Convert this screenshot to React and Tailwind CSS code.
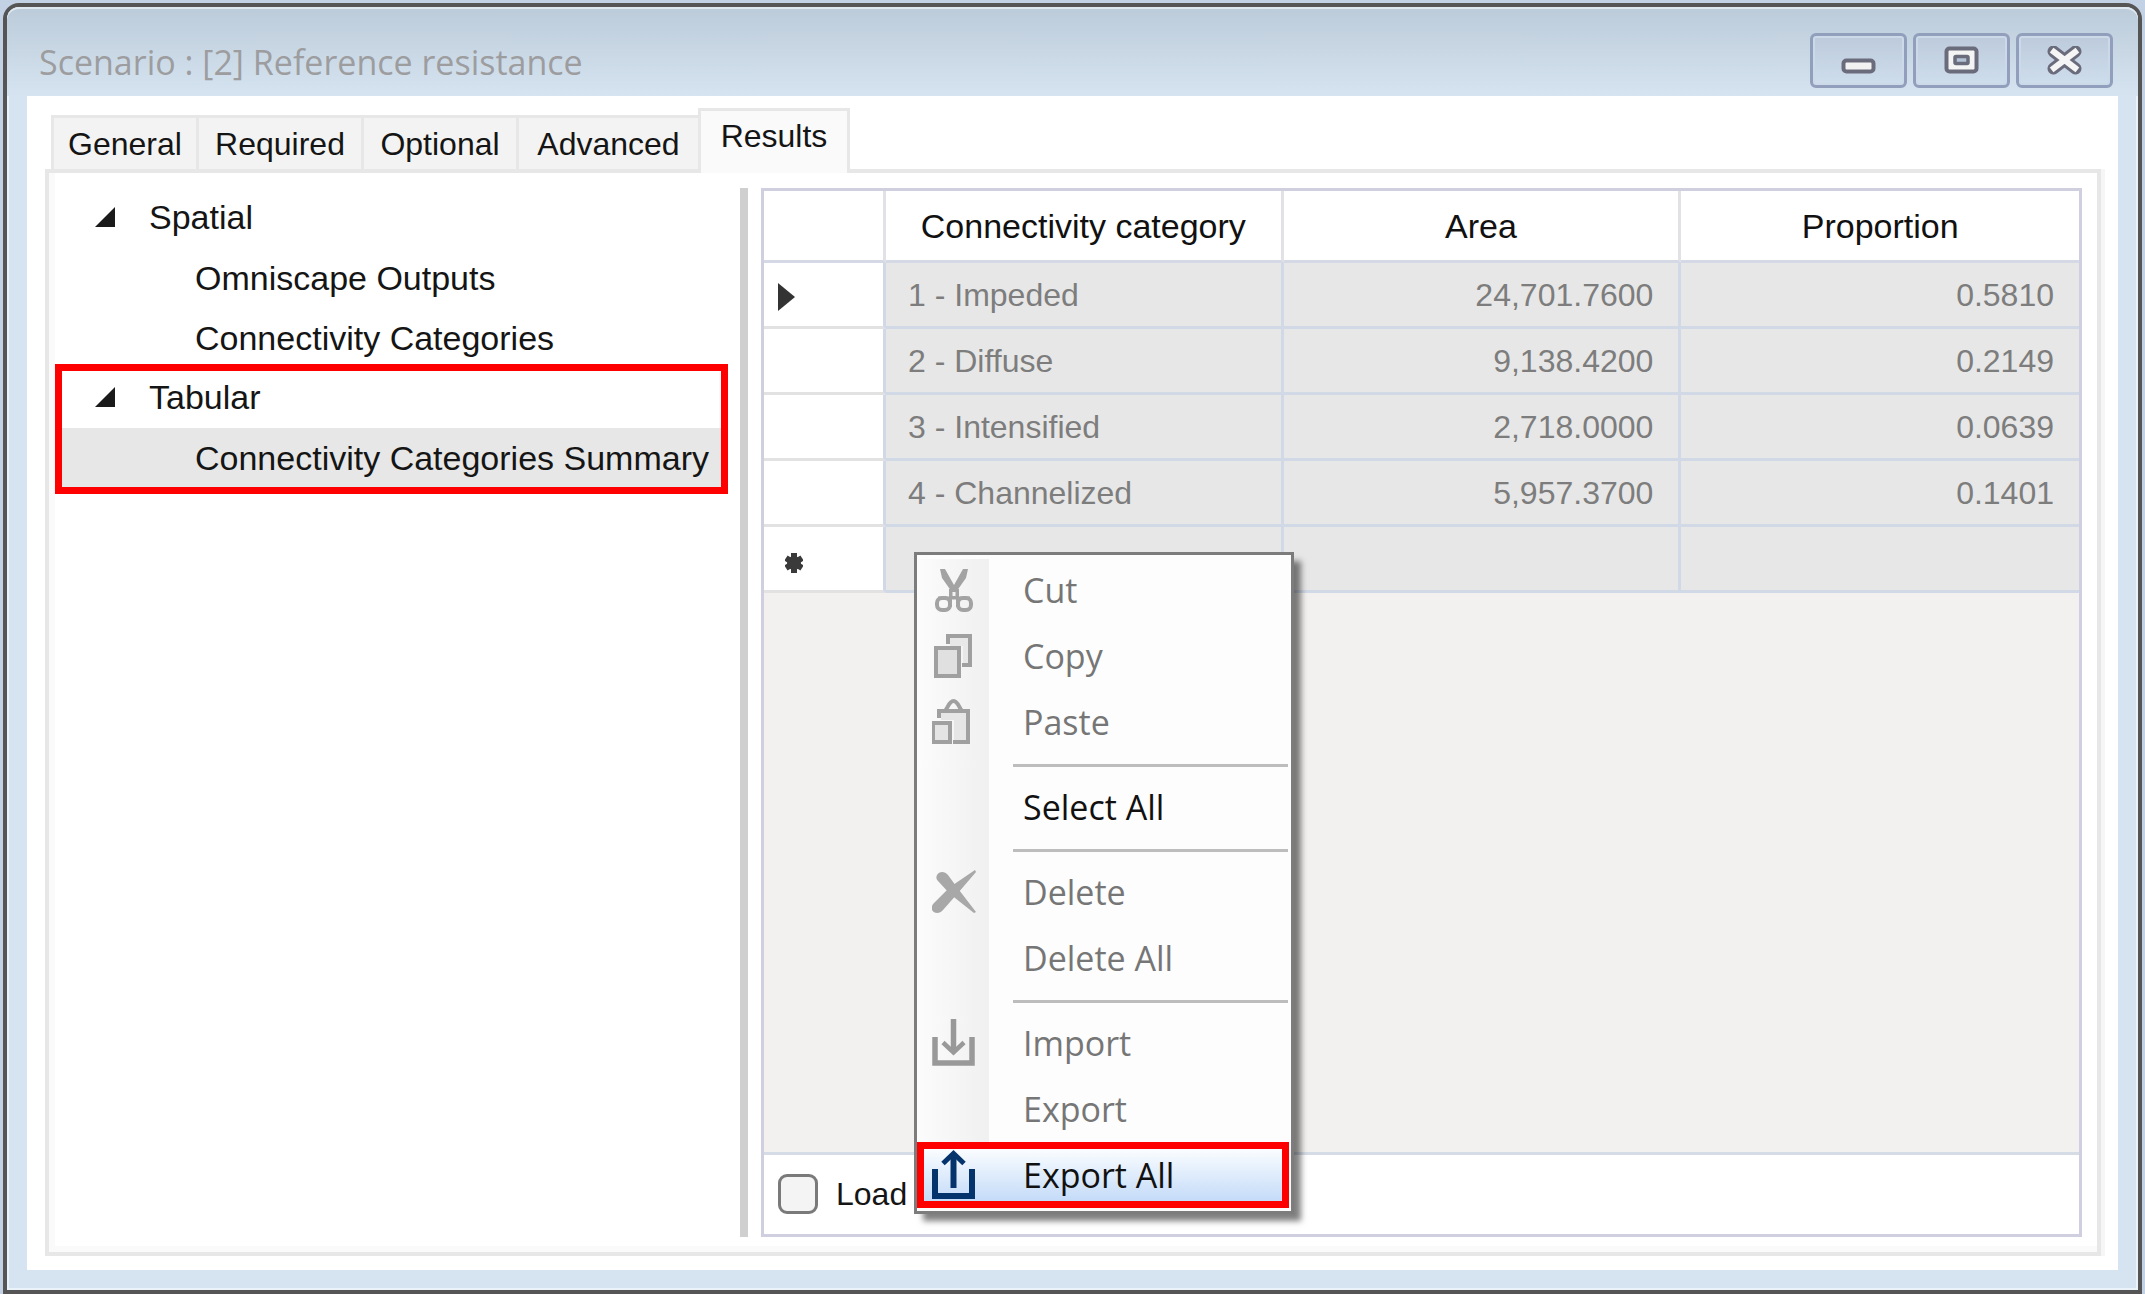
import React from "react";

const tabs = [
  { label: "General", width: "w-[145px]" },
  { label: "Required", width: "w-[165px]" },
  { label: "Optional", width: "w-[155px]" },
  { label: "Advanced", width: "w-[182px]" },
];

const rows = [
  ["1 - Impeded", "24,701.7600", "0.5810"],
  ["2 - Diffuse", "9,138.4200", "0.2149"],
  ["3 - Intensified", "2,718.0000", "0.0639"],
  ["4 - Channelized", "5,957.3700", "0.1401"],
];

function MinimizeIcon() {
  return (
    <svg width="36" height="30" viewBox="0 0 36 30" aria-hidden="true">
      <rect x="2.500" y="14.500" width="30" height="11" rx="3" fill="#f2f2f2" stroke="#6a6c7c" strokeWidth="4" />
    </svg>
  );
}

function MaximizeIcon() {
  return (
    <svg width="36" height="30" viewBox="0 0 36 30" aria-hidden="true">
      <rect x="2.500" y="2.500" width="30" height="23" rx="3" fill="#f4f4f4" stroke="#6a6c7c" strokeWidth="4" />
      <rect x="11" y="10.500" width="13" height="7" rx="1" fill="#b4c2d6" stroke="#6a6c7c" strokeWidth="3.500" />
    </svg>
  );
}

function CloseIcon() {
  return (
    <svg width="36" height="30" viewBox="0 0 36 30" fill="none" aria-hidden="true">
      <path d="M6.500 5.500L28.500 22.500M28.500 5.500L6.500 22.500" stroke="#6a6c7c" strokeWidth="12" strokeLinecap="round" />
      <path d="M7 6L28 22M28 6L7 22" stroke="#f5f5f5" strokeWidth="6" strokeLinecap="square" />
    </svg>
  );
}

function CutIcon() {
  return (
    <svg width="44" height="50" viewBox="0 0 44 50" fill="none" stroke="#a3a3a3" aria-hidden="true">
      <path d="M8 4L13 4L22 20L31 4L36 4L34 13L25.500 25V34H18.500V25L10 13Z" fill="#a3a3a3" stroke="none" />
      <path d="M22 27V31" stroke="#f4f4f4" strokeWidth="3" />
      <path d="M18.500 24V42M25.500 24V42M6 33H38" strokeWidth="3" />
      <rect x="5" y="33" width="13" height="12" rx="5" strokeWidth="4" />
      <rect x="26" y="33" width="13" height="12" rx="5" strokeWidth="4" />
    </svg>
  );
}

function CopyIcon() {
  return (
    <svg width="44" height="50" viewBox="0 0 44 50" fill="none" stroke="#a0a0a0" strokeWidth="4" aria-hidden="true">
      <path d="M18 5H39V34H31V15H18Z" fill="#e8e8e8" stroke="none" />
      <path d="M16 13V5H38V34H30" />
      <rect x="4" y="17" width="23" height="28" fill="#e0e0e0" />
    </svg>
  );
}

function PasteIcon() {
  return (
    <svg width="44" height="50" viewBox="0 0 44 50" fill="none" stroke="#a0a0a0" strokeWidth="4" aria-hidden="true">
      <path d="M9 13H36V45H22V23H9Z" fill="#e6e6e6" stroke="none" />
      <path d="M7 21V14H36V45H21" />
      <path d="M13 14C16 11 17 4 21.500 4C26 4 27 11 30 14" />
      <rect x="1" y="26" width="17" height="19" fill="#e4e4e4" />
    </svg>
  );
}

function DeleteIcon() {
  return (
    <svg width="44" height="50" viewBox="0 0 44 50" fill="#a8a8a8" aria-hidden="true">
      <path d="M5 8C7 4 13 4 16 8L24 19L44 45L42 46L18 27L6 14C4 12 4 10 5 8Z" />
      <path d="M43 3L44 5L26 26L11 43C8 47 2 47 0 43C-1 40 0 38 3 35L18 20Z" />
    </svg>
  );
}

function ImportIcon() {
  return (
    <svg width="44" height="54" viewBox="0 0 44 54" fill="none" stroke="#999999" strokeWidth="5.500" aria-hidden="true">
      <path d="M3 21V47H40V21" />
      <path d="M21.500 3V36" />
      <path d="M11 26.500L21.500 36.500L32 26.500" strokeWidth="4.500" />
    </svg>
  );
}

function ExportIcon() {
  return (
    <svg width="44" height="54" viewBox="0 0 44 54" fill="none" stroke="#05346c" strokeWidth="6" aria-hidden="true">
      <path d="M3 21V48H40V21" />
      <path d="M21.500 40V6" />
      <path d="M11 15.500L21.500 5.500L32 15.500" strokeWidth="5" />
    </svg>
  );
}

const menu = [
  { label: "Cut", icon: CutIcon, disabled: true },
  { label: "Copy", icon: CopyIcon, disabled: true },
  { label: "Paste", icon: PasteIcon, disabled: true },
  null,
  { label: "Select All" },
  null,
  { label: "Delete", icon: DeleteIcon, disabled: true },
  { label: "Delete All", disabled: true },
  null,
  { label: "Import", icon: ImportIcon, disabled: true },
  { label: "Export", disabled: true },
  { label: "Export All", icon: ExportIcon, active: true },
];

function WindowButton({ label, children }) {
  return (
    <button
      type="button"
      aria-label={label}
      className="flex h-[55px] w-[97px] items-center justify-center rounded-md border-[3px] border-[#929fbc] bg-linear-to-b from-[#bccadb] to-[#cfdeed] inset-ring-2 inset-ring-[#cbd9e8]"
    >
      {children}
    </button>
  );
}

function TitleBar() {
  return (
    <header className="flex h-[89px] items-start justify-between rounded-t-xl bg-linear-to-b from-[#bccbd9] to-[#d6e4f1] pl-8 pr-[25px] pt-[26px] shadow-[inset_0_2px_0_#dfe8f1]">
      <h1 className="whitespace-nowrap pt-1 font-['Open_Sans',sans-serif] text-[34px] leading-[50px] text-[#9d9d9f]">
        Scenario : [2] Reference resistance
      </h1>
      <div className="flex gap-[6px]">
        <WindowButton label="Minimize"><MinimizeIcon /></WindowButton>
        <WindowButton label="Maximize"><MaximizeIcon /></WindowButton>
        <WindowButton label="Close"><CloseIcon /></WindowButton>
      </div>
    </header>
  );
}

function TabBar() {
  return (
    <div role="tablist" className="flex items-end pl-1.5 text-[32px] leading-[50px]">
      {tabs.map((tab) => (
        <button
          key={tab.label}
          type="button"
          role="tab"
          aria-selected="false"
          className={`${tab.width} h-[54px] border-l-[3px] border-t-[3px] border-[#e7e7e7] bg-[#f3f3f3] text-center`}
        >
          {tab.label}
        </button>
      ))}
      <button
        type="button"
        role="tab"
        aria-selected="true"
        className="relative -mb-1 h-[65px] w-[152px] border-x-[3px] border-t-[3px] border-[#e7e7e7] bg-[#fafafa] pb-3 text-center"
      >
        Results
      </button>
    </div>
  );
}

function TreeParent({ label }) {
  return (
    <button type="button" aria-expanded="true" className="flex h-[60px] w-full items-center gap-[34px] pb-0.5 pl-[46px] text-left">
      <svg width="20" height="20" viewBox="0 0 20 20" aria-hidden="true">
        <path d="M20 0V20H0Z" fill="#1a1a1a" />
      </svg>
      {label}
    </button>
  );
}

function TreeChild({ label, selected }) {
  const fill = selected ? "bg-[#e7e7e7]" : "";
  return (
    <div className="pl-3">
      <button type="button" className={`${fill} flex h-[60px] w-full items-center pl-[134px] text-left`}>
        {label}
      </button>
    </div>
  );
}

function Tree() {
  return (
    <nav className="w-[691px] shrink-0 whitespace-nowrap text-[34px] leading-[50px]">
      <TreeParent label="Spatial" />
      <TreeChild label="Omniscape Outputs" />
      <TreeChild label="Connectivity Categories" />
      <div className="relative mr-4">
        <TreeParent label="Tabular" />
        <TreeChild label="Connectivity Categories Summary" selected />
        <div className="pointer-events-none absolute -bottom-1.5 -top-1 left-1.5 -right-1 border-[7px] border-[#ff0000]" />
      </div>
    </nav>
  );
}

const headCell = "h-[72px] border-b-[3px] border-r-[3px] border-b-[#d5d9e6] border-r-[#e2e2e6] bg-white font-normal last:border-r-0";
const bodyCell = "h-[66px] border-b-[3px] border-r-[3px] border-[#d1d9e6] bg-[#e7e7e7] p-0 last:border-r-0";
const rowHead = "h-[66px] border-b-[3px] border-r-[3px] border-b-[#e2e2e2] border-r-[#d1d9e6] bg-white p-0";

function DataGrid() {
  return (
    <table className="w-full table-fixed border-separate border-spacing-0 text-[32px] leading-[50px] text-[#7d7d7d]">
      <colgroup>
        <col className="w-[122px]" />
        <col />
        <col />
        <col />
      </colgroup>
      <thead className="text-[34px] text-[#111111]">
        <tr>
          <td className={headCell} />
          <th scope="col" className={headCell}>Connectivity category</th>
          <th scope="col" className={headCell}>Area</th>
          <th scope="col" className={headCell}>Proportion</th>
        </tr>
      </thead>
      <tbody>
        {rows.map((row, i) => (
          <tr key={row[0]}>
            <td className={rowHead}>
              {i === 0 && (
                <svg className="ml-[14px] mt-1 block" width="17" height="28" viewBox="0 0 17 28" aria-hidden="true">
                  <path d="M0 0L17 14L0 28Z" fill="#333333" />
                </svg>
              )}
            </td>
            <td className={bodyCell}><div className="pl-[22px]">{row[0]}</div></td>
            <td className={bodyCell}><div className="pr-[25px] text-right">{row[1]}</div></td>
            <td className={bodyCell}><div className="pr-[25px] text-right">{row[2]}</div></td>
          </tr>
        ))}
        <tr>
          <td className={rowHead}>
            <svg className="ml-[21px] mt-2 block" width="18" height="20" viewBox="0 0 18 20" aria-hidden="true">
              <path d="M9 0V20M1 5L17 15M17 5L1 15" stroke="#3a3a3a" strokeWidth="6" />
              <circle cx="9" cy="10" r="7" fill="#3a3a3a" />
            </svg>
          </td>
          <td className={bodyCell} />
          <td className={bodyCell} />
          <td className={bodyCell} />
        </tr>
      </tbody>
    </table>
  );
}

function MenuItem({ item }) {
  const Icon = item.icon;
  const tone = item.disabled ? "text-[#767676]" : "text-[#111111]";
  return (
    <button
      type="button"
      role="menuitem"
      disabled={item.disabled}
      className={`${tone} relative flex h-[66px] w-full items-center text-left`}
    >
      {item.active && (
        <span className="absolute inset-y-0 left-0 right-0.5 border-[7px] border-[#ff0000] bg-linear-to-b from-[#fbfdff] to-[#c4dbf8]" />
      )}
      <span className="relative flex w-[106px] shrink-0 pl-[15px]">{Icon && <Icon />}</span>
      <span className="relative">{item.label}</span>
    </button>
  );
}

function ContextMenu() {
  return (
    <div
      role="menu"
      className="absolute left-[150px] top-[361px] w-[380px] border-[3px] border-[#7c7c7c] bg-[#fdfdfd] pb-[3px] pt-0.5 font-['Open_Sans',sans-serif] text-[34px] leading-[50px] shadow-[8px_8px_6px_-1px_rgba(0,0,0,0.5)]"
    >
      <div className="absolute bottom-[68px] left-0 top-1 w-[72px] bg-linear-to-r from-[#fcfcfc] to-[#f0f0f0]" />
      {menu.map((item, i) =>
        item ? (
          <MenuItem key={item.label} item={item} />
        ) : (
          <div key={i} role="separator" className="flex h-[19px] items-center pl-24 pr-[3px] pt-0.5">
            <div className="h-[3px] w-full bg-[#bdbdbd]" />
          </div>
        )
      )}
    </div>
  );
}

function ResultsGrid() {
  return (
    <section className="relative ml-[13px] flex min-w-0 flex-1 flex-col border-[3px] border-[#cfcfe0] bg-[#f3f1ef]">
      <DataGrid />
      <div className="flex-1" />
      <label className="flex h-[82px] items-center gap-[18px] border-t-[3px] border-[#d5dce6] bg-white pb-0.5 pl-[14px] text-[32px] leading-[50px]">
        <input
          type="checkbox"
          className="size-10 appearance-none rounded-[9px] border-[3px] border-[#7a7a7a] bg-[#f4f4f4]"
        />
        Load
      </label>
      <ContextMenu />
    </section>
  );
}

export default function App() {
  return (
    <div className="flex min-h-screen flex-col bg-[#c3d1e5] px-[3px] pt-[3px] font-['Liberation_Sans',Arial,sans-serif] text-[#151515]">
      <div className="flex flex-1 flex-col rounded-t-2xl border-4 border-[#555555] bg-[#d6e4f1] inset-ring-2 inset-ring-[#eaf2fa]">
        <TitleBar />
        <main className="mx-5 mb-5 flex flex-1 flex-col bg-white pb-[14px] pl-[18px] pr-[17px] pt-3">
          <TabBar />
          <div
            role="tabpanel"
            className="flex flex-1 border-4 border-[#e7e7e7] bg-white py-[15px] pr-[15px] shadow-[inset_6px_-6px_0_#fafafa,4px_0_0_#f6f6f6]"
          >
            <Tree />
            <div className="w-2 shrink-0 bg-[#cfcfcf]" />
            <ResultsGrid />
          </div>
        </main>
      </div>
    </div>
  );
}
